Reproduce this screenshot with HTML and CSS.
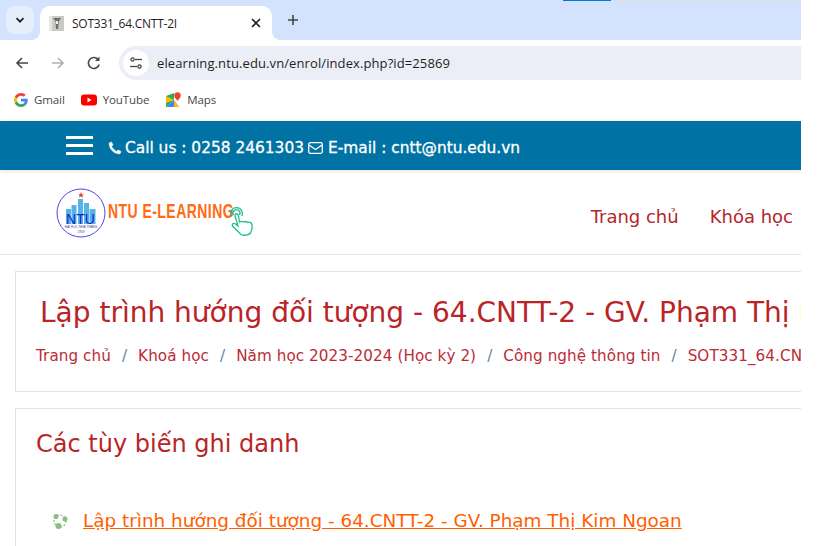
FILE: index.html
```html
<!DOCTYPE html>
<html lang="en">
<head>
    <meta charset="UTF-8">
    <meta name="viewport" content="width=device-width, initial-scale=1.0">
    <title>SOT331_64.CNTT-2I</title>
    <link rel="stylesheet" href="styles.css">
</head>
<body>
    <div class="window">
        <!-- browser tabs -->
        <div class="tabstrip">
            <div class="loadbar"><span class="loadbar-on"></span></div>
            <div class="tabmenu">
                <svg width="12" height="12" viewBox="0 0 12 12"><path d="M2.5 4.2 6 7.7l3.5-3.5" fill="none" stroke="#1f1f1f" stroke-width="1.7"/></svg>
            </div>
            <div class="tab">
                <svg class="favicon" width="16" height="16" viewBox="0 0 16 16">
                    <rect x="1" y="1" width="15" height="15" fill="#c9c9c6"/>
                    <rect x="1" y="1" width="3" height="15" fill="#e6e6e4"/>
                    <path d="M5 3h8l-2 3-1 8H8L7.500 6z" fill="#6d6d6b"/>
                    <rect x="8" y="6" width="2" height="3" fill="#f2f2f2"/>
                </svg>
                <span class="tab-title">SOT331_64.CNTT-2I</span>
                <svg class="tab-close" width="10" height="10" viewBox="0 0 10 10"><path d="M1 1l8 8M9 1l-8 8" stroke="#1f1f1f" stroke-width="1.6"/></svg>
            </div>
            <svg class="newtab" width="12" height="12" viewBox="0 0 12 12"><path d="M6 1v10M1 6h10" stroke="#444746" stroke-width="1.6"/></svg>
        </div>

        <!-- address bar -->
        <div class="toolbar">
            <svg class="navicon" width="16" height="16" viewBox="0 0 16 16"><path d="M14 8H3M8 3 3 8l5 5" fill="none" stroke="#474747" stroke-width="1.6"/></svg>
            <svg class="navicon" width="16" height="16" viewBox="0 0 16 16"><path d="M2 8h11M8 3l5 5-5 5" fill="none" stroke="#b0b0b0" stroke-width="1.6"/></svg>
            <svg class="navicon" width="16" height="16" viewBox="0 0 16 16"><path d="M13.200 9.500A5.500 5.500 0 1 1 12 4.300" fill="none" stroke="#474747" stroke-width="1.6"/><path d="M13.500 1.500V6H9z" fill="#474747"/></svg>
            <div class="omnibox">
                <div class="sitebtn">
                    <svg width="14" height="14" viewBox="0 0 14 14"><g fill="none" stroke="#474747" stroke-width="1.300"><circle cx="3.500" cy="3.500" r="1.600"/><path d="M6 3.500h7"/><circle cx="10.500" cy="10.500" r="1.600"/><path d="M1 10.500h7"/></g></svg>
                </div>
                <span class="url">elearning.ntu.edu.vn/enrol/index.php?id=25869</span>
            </div>
        </div>

        <!-- bookmarks -->
        <div class="bookmarks">
            <div class="bookmark">
                <svg width="14" height="14" viewBox="0 0 48 48"><path fill="#ea4335" d="M24 9.500c3.500 0 6.700 1.200 9.200 3.600l6.900-6.900C35.900 2.400 30.500 0 24 0 14.600 0 6.500 5.400 2.600 13.200l8 6.200C12.400 13.700 17.700 9.500 24 9.500z"/><path fill="#4285f4" d="M47 24.500c0-1.600-.1-3.100-.4-4.500H24v9h13c-.6 3-2.300 5.500-4.800 7.200l7.700 6C44.400 37.900 47 31.800 47 24.500z"/><path fill="#fbbc05" d="M10.600 28.600a14.500 14.500 0 0 1 0-9.200l-8-6.200a24 24 0 0 0 0 21.600z"/><path fill="#34a853" d="M24 48c6.500 0 11.900-2.100 15.900-5.800l-7.700-6c-2.200 1.400-4.900 2.300-8.200 2.300-6.300 0-11.600-4.200-13.400-9.900l-8 6.200C6.500 42.600 14.600 48 24 48z"/></svg>
                <span>Gmail</span>
            </div>
            <div class="bookmark">
                <svg width="16" height="12" viewBox="0 0 16 12"><rect width="16" height="11" y=".5" rx="3" fill="#f00"/><path d="M6.500 3.500v5L10.500 6z" fill="#fff"/></svg>
                <span>YouTube</span>
            </div>
            <div class="bookmark bookmark-maps">
                <svg width="15" height="16" viewBox="0 0 15 16"><path d="M0 4l8-3v7L0 15z" fill="#34a853"/><path d="M0 15l8-7 5 7z" fill="#4285f4"/><path d="M8 8l5 7H8z" fill="#fbbc05"/><path d="M0 4l8 4-8 3z" fill="#fbbc05"/><circle cx="11.500" cy="3.500" r="3.200" fill="#ea4335"/><path d="M9 5.500h5L11.500 9z" fill="#ea4335"/></svg>
                <span>Maps</span>
            </div>
        </div>

        <!-- site -->
        <div class="page">
            <div class="topbar">
                <div class="burger"><span></span><span></span><span></span></div>
                <div class="contact">
                    <svg width="14" height="14" viewBox="0 0 14 14"><path d="M3.500 1 1.200 2C1 8 6 13 12 12.800l1-2.300-3-1.500-1.300 1.500C7 9.800 4.200 7 3.500 5.300L5 4z" fill="#fff" stroke="#fff" stroke-width=".6"/></svg>
                    <span>Call us : 0258 2461303</span>
                    <svg class="mail" width="15" height="12" viewBox="0 0 15 12"><rect x=".7" y=".7" width="13.600" height="10.600" rx="1.500" fill="none" stroke="#fff" stroke-width="1.300"/><path d="M1 3l6.500 4.500L14 3" fill="none" stroke="#fff" stroke-width="1.300"/></svg>
                    <span>E-mail : cntt@ntu.edu.vn</span>
                </div>
            </div>

            <div class="navbar">
                <div class="logo">
                    <svg class="logo-badge" width="50" height="50" viewBox="0 0 50 50">
                        <circle cx="25" cy="25" r="24" fill="#fff" stroke="#5b3fe6" stroke-width="1"/>
                        <path d="M25 4l.9 2.200h2l-1.500 1.300.6 2.100-2-1.200-2 1.200.6-2.100-1.500-1.300h2z" fill="#e2452f"/>
                        <g fill="#55b4e6">
                            <rect x="10" y="21" width="5" height="15"/>
                            <rect x="15.500" y="17" width="5" height="19"/>
                            <rect x="22" y="11" width="5" height="25"/>
                            <rect x="28" y="15" width="5" height="21"/>
                            <rect x="33.500" y="21" width="6" height="15"/>
                        </g>
                        <text class="logo-ntu" x="24.500" y="36" text-anchor="middle">NTU</text>
                        <text class="logo-small" x="25" y="40" text-anchor="middle">ĐẠI HỌC NHA TRANG</text>
                        <text class="logo-small" x="25" y="44.500" text-anchor="middle">1959</text>
                    </svg>
                    <span class="logo-text">NTU E-LEARNING</span>
                    <svg class="logo-hand" width="28" height="32" viewBox="0 0 28 32">
                        <g fill="none" stroke="#1fbf8a" stroke-width="1.300">
                            <path d="M4 10a6 6 0 1 1 11 0"/>
                            <path d="M6.500 9a3.500 3.500 0 1 1 6 0"/>
                            <path d="M8 10c0-3 3-3 3.500 0l1 6c2-1 3-1 4 0 2-1 3-.5 4 .5 2-1 4 0 4.500 2 .5 3 0 6-1.500 8.500-1.500 2-7 3-9.500 1.500L5.500 20c-1-2 1-3.500 3-2l2.500 2z"/>
                        </g>
                    </svg>
                </div>
                <div class="menu">
                    <a class="menu-item">Trang chủ</a>
                    <a class="menu-item">Khóa học</a>
                </div>
            </div>

            <div class="card card-head">
                <h1 class="course-title">Lập trình hướng đối tượng - 64.CNTT-2 - GV. Phạm Thị Kim Ngoan</h1>
                <div class="crumbs">
                    <a>Trang chủ</a><i>/</i><a>Khoá học</a><i>/</i><a>Năm học 2023-2024 (Học kỳ 2)</a><i>/</i><a>Công nghệ thông tin</a><i>/</i><a>SOT331_64.CNTT-2</a>
                </div>
            </div>

            <div class="card card-main">
                <h2 class="enrol-title">Các tùy biến ghi danh</h2>
                <div class="course-row">
                    <svg width="16" height="16" viewBox="0 0 16 16">
                        <g fill="#8dbb84">
                            <circle cx="4" cy="3.500" r="2.500"/>
                            <circle cx="13" cy="6" r="2.500"/>
                            <circle cx="6.500" cy="13" r="3"/>
                        </g>
                        <g fill="none" stroke="#8dbb84" stroke-width="1.200" stroke-dasharray="2 1.500">
                            <circle cx="8" cy="8" r="6"/>
                        </g>
                    </svg>
                    <a class="course-link">Lập trình hướng đối tượng - 64.CNTT-2 - GV. Phạm Thị Kim Ngoan</a>
                </div>
            </div>
        </div>
    </div>
</body>
</html>
```

FILE: styles.css
```css
html, body {
    margin: 0;
    height: 546px;
    overflow: hidden;
    background: white;
}
.window {
    width: 801px;
    height: 546px;
    overflow: hidden;
    font-family: "Open Sans", "Noto Sans", sans-serif;
}
.tabstrip {
    position: relative;
    height: 40px;
    background-color: #d3e3fd;
    display: flex;
    align-items: flex-end;
    padding-left: 6px;
    box-sizing: border-box;
}
.loadbar {
    position: absolute;
    top: 0;
    left: 563px;
    right: 0;
    height: 1px;
    background-color: #dedede;
}
.loadbar-on {
    display: block;
    width: 48px;
    height: 1px;
    background-color: #0078d4;
}
.tabmenu {
    width: 28px;
    height: 28px;
    margin-bottom: 6px;
    border-radius: 9px;
    background-color: #e6eefc;
    display: flex;
    align-items: center;
    justify-content: center;
}
.tab {
    position: relative;
    width: 232px;
    height: 34px;
    margin-left: 6px;
    background: white;
    border-radius: 10px 10px 0 0;
    display: flex;
    align-items: center;
    box-sizing: border-box;
    padding: 0 11px 0 8px;
}
/* concave corners where the tab meets the toolbar */
.tab::before, .tab::after {
    content: "";
    position: absolute;
    bottom: 0;
    width: 8px;
    height: 8px;
}
.tab::before {
    left: -8px;
    background: radial-gradient(circle at 0 0, #d3e3fd 7.5px, white 8px);
}
.tab::after {
    right: -8px;
    background: radial-gradient(circle at 100% 0, #d3e3fd 7.5px, white 8px);
}
.tab-title {
    margin-left: 8px;
    font-size: 12px;
    letter-spacing: -0.25px;
    color: #1f1f1f;
    flex: 1;
}
.newtab {
    margin: 0 0 14px 15px;
}
.toolbar {
    height: 40px;
    background: white;
    border-radius: 8px 0 0 0;
    display: flex;
    align-items: flex-start;
    padding-left: 14px;
    gap: 20px;
}
.navicon {
    margin-top: 15px;
}
.omnibox {
    flex: 1;
    height: 34px;
    margin: 6px 0 0 -3px;
    background-color: #ebeef7;
    border-radius: 17px 0 0 17px;
    display: flex;
    align-items: center;
    padding-left: 4px;
}
.sitebtn {
    width: 26px;
    height: 26px;
    border-radius: 50%;
    background: white;
    display: flex;
    align-items: center;
    justify-content: center;
}
.url {
    margin-left: 8px;
    font-size: 13px;
    color: #1f1f1f;
    letter-spacing: 0.1px;
}
.bookmarks {
    height: 41px;
    background: white;
    display: flex;
    align-items: center;
    padding-left: 14px;
    gap: 16px;
    box-sizing: border-box;
    padding-bottom: 2px;
}
.bookmark {
    display: flex;
    align-items: center;
    gap: 6px;
    font-size: 11.500px;
    letter-spacing: -0.1px;
    color: #474747;
}
.bookmark-maps {
    margin-left: 1px;
}
.page {
    font-family: "DejaVu Sans", sans-serif;
}
.topbar {
    height: 49px;
    background-color: #0073a4;
    display: flex;
    align-items: center;
    padding-left: 66px;
    box-shadow: 0 1px 4px rgba(0,0,0,0.12);
    position: relative;
}
.burger {
    width: 27px;
    display: flex;
    flex-direction: column;
    gap: 5px;
}
.burger span {
    display: block;
    height: 3px;
    background: white;
}
.contact {
    margin: 5px 0 0 15px;
    display: flex;
    align-items: center;
    gap: 3px;
    color: white;
    font-size: 15.400px;
    font-weight: 500;
    -webkit-text-stroke: 0.3px white;
}
.mail {
    margin: 0 2px 0 1px;
}
.navbar {
    height: 85px;
    box-sizing: border-box;
    border-bottom: 1px solid #e4e4e4;
    display: flex;
    align-items: center;
    justify-content: space-between;
}
.logo {
    display: flex;
    align-items: center;
    margin-left: 56px;
    position: relative;
    height: 50px;
}
.logo-badge {
    margin-top: 2px;
}
.logo-ntu {
    font-family: "Liberation Sans", sans-serif;
    font-size: 14px;
    fill: #1a1fd6;
}
.logo-small {
    font-family: "Liberation Sans", sans-serif;
    font-size: 3.200px;
    fill: #3a3ab0;
}
.logo-text {
    margin: 0 0 2px 2px;
    font-family: "Liberation Sans", sans-serif;
    font-size: 14px;
    font-weight: bold;
    letter-spacing: 0.45px;
    color: #ff6a13;
    transform: scaleY(1.4);
}
.logo-hand {
    position: absolute;
    left: 171px;
    top: 19px;
}
.menu {
    display: flex;
    gap: 31px;
    margin-right: 8px;
    margin-top: 9px;
    white-space: nowrap;
}
.menu-item {
    font-size: 18px;
    color: #b3262b;
}
.card {
    margin-left: 15px;
    border: 1px solid #e2e2e2;
    border-right: none;
    background: white;
    white-space: nowrap;
    overflow: hidden;
}
.card-head {
    margin-top: 16px;
    height: 121px;
    box-sizing: border-box;
    padding: 24px 0 0 20px;
}
.course-title {
    margin: 0 0 0 4px;
    font-size: 28px;
    line-height: 33px;
    font-weight: normal;
    color: #b92427;
}
.crumbs {
    margin-top: 17px;
    font-size: 15.200px;
    letter-spacing: 0.07px;
    color: #b92c35;
    line-height: 20px;
}
.crumbs i {
    font-style: normal;
    color: #5e84a8;
    margin: 0 11px;
}
.card-main {
    margin-top: 16px;
    height: 160px;
    box-sizing: border-box;
    padding: 19px 0 0 20px;
}
.enrol-title {
    margin: 0;
    font-size: 24px;
    line-height: 33px;
    font-weight: normal;
    color: #b92427;
}
.course-row {
    margin-top: 49px;
    display: flex;
    align-items: center;
    gap: 15px;
    padding-left: 16px;
}
.course-link {
    font-size: 18.400px;
    color: #ff5f00;
    text-decoration: underline;
}
```
